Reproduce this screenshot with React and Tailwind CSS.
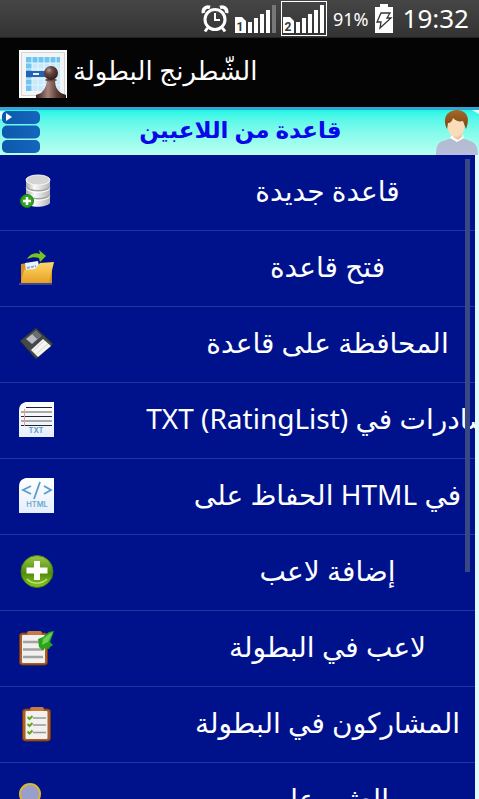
import React from "react";

function AlarmIcon() {
  return (
    <svg width="28" height="28" viewBox="0 0 28 28" fill="none" stroke="#fff" aria-hidden="true">
      <circle cx="14" cy="14.500" r="10" strokeWidth="3" />
      <path d="M14 8v7h5" strokeWidth="2" />
      <path d="M2.500 8C1.500 4 5 1 9 2.500M25.500 8C26.500 4 23 1 19 2.500" strokeWidth="3.500" />
      <path d="M6.500 23 4 26.500M21.500 23l2.500 3.500" strokeWidth="3" />
    </svg>
  );
}

function SignalIcon({ sim, faded }) {
  return (
    <svg width="42" height="29" viewBox="0 0 42 29" aria-hidden="true">
      <path d="M0 13h7l4 4v12H0z" fill="#fff" />
      <text x="5" y="27" textAnchor="middle" fontSize="12" fontWeight="700" fontFamily="Roboto, sans-serif" fill="#333">{sim}</text>
      <path d="M13 18h4v11h-4zM19 14h4v15h-4zM25 10h4v19h-4zM31 6h4v23h-4z" fill="#fff" />
      <path d="M37 1h4v28h-4z" fill={faded ? "#777" : "#fff"} />
    </svg>
  );
}

function BatteryIcon() {
  return (
    <svg width="18" height="30" viewBox="0 0 18 30" aria-hidden="true">
      <path d="M5 0h8v3h5v26H0V3h5z" fill="#fff" />
      <path d="M6 9h9l-3 5h4L5 24l1-6H2z" fill="none" stroke="#333" strokeWidth="1.300" />
    </svg>
  );
}

function PawnIcon() {
  return (
    <svg className="shrink-0" width="48" height="48" viewBox="0 0 48 48" aria-hidden="true">
      <defs>
        <radialGradient id="pawn" cx=".35" cy=".3" r=".8">
          <stop stopColor="#b59a94" /><stop offset=".35" stopColor="#684740" /><stop offset="1" stopColor="#2b1613" />
        </radialGradient>
        <linearGradient id="pawnBody">
          <stop stopColor="#3c211c" /><stop offset=".4" stopColor="#a5857d" /><stop offset=".7" stopColor="#5c3b34" /><stop offset="1" stopColor="#2b1613" />
        </linearGradient>
      </defs>
      <path d="M0 0h48v48H0z" fill="#fafafa" />
      <path d="M2.500 2.500h43v43h-43z" fill="#f2f4f5" stroke="#d2d5d6" />
      <path d="M7 7h34v34H7z" fill="#c8e9fa" />
      <path d="M7 7h34v6H7zM7 7h6v34H7z" fill="#6fc5f0" />
      <path d="M13 7v34M19 7v34M25 7v34M31 7v34M37 7v34M7 13h34M7 19h34M7 29h34M7 35h34" stroke="#e6f6fd" />
      <path d="M7 21h19v6H7z" fill="#2563b5" />
      <path d="M14 24h6" stroke="#e7f4ff" strokeWidth="2" />
      <path d="M28 29h8c0 8 2 11 6 14l5 2v3H17v-3l5-2c4-4 6-8 6-14z" fill="url(#pawnBody)" />
      <ellipse cx="32" cy="30" rx="6" ry="1.500" fill="#6b4a43" />
      <circle cx="32" cy="23" r="7" fill="url(#pawn)" />
    </svg>
  );
}

function MenuIcon() {
  return (
    <svg width="40" height="44" viewBox="0 0 40 44" aria-hidden="true">
      <defs>
        <linearGradient id="menu" x1="0" x2="1">
          <stop stopColor="#0d58ac" /><stop offset="1" stopColor="#1466bd" />
        </linearGradient>
      </defs>
      <path d="M0 0h8v8H0z" fill="#e8fbff" />
      <rect x="2" y="0" width="38" height="13" rx="5" fill="url(#menu)" />
      <rect x="2" y="14.500" width="38" height="13" rx="5" fill="url(#menu)" />
      <rect x="2" y="29" width="38" height="13" rx="5" fill="url(#menu)" />
      <path d="m6 2 6 4-6 4z" fill="#fff" />
    </svg>
  );
}

function UserIcon() {
  return (
    <svg width="44" height="46" viewBox="0 0 44 46" aria-hidden="true">
      <defs>
        <linearGradient id="shirt" x2="0" y2="1">
          <stop stopColor="#b4bad0" /><stop offset="1" stopColor="#b9bedb" />
        </linearGradient>
        <linearGradient id="hair" x2="0" y2="1">
          <stop stopColor="#a5682a" /><stop offset="1" stopColor="#7b4310" />
        </linearGradient>
      </defs>
      <path d="M37 0h7v4z" fill="#e9ffff" />
      <path d="M1 46c0-9 1-13 7-15l9-3h10l8 3c6 2 8 6 8 15z" fill="url(#shirt)" />
      <path d="m15 28 7 4 7-4-1-3H17z" fill="#fff" />
      <path d="M18 22h9v5l-4 3-5-3z" fill="#efc59b" />
      <ellipse cx="21" cy="16" rx="8.500" ry="11" fill="#fbdcb8" />
      <path d="M12 19C7 8 12 1 21 0c10 0 15 7 10 19l-3-8c-4 1-7 0-10-3-1 4-3 5-5 5z" fill="url(#hair)" />
    </svg>
  );
}

const icons = {
  database: (
    <>
      <path d="M8 6v23c3 5 20 5 24 0V6z" fill="url(#metal)" />
      <path d="M8 13c4 5 20 5 24 0M8 21c4 5 20 5 24 0" fill="none" stroke="#a5a5a5" strokeWidth="1.500" />
      <path d="M8 14.500c4 5 20 5 24 0M8 22.500c4 5 20 5 24 0" fill="none" stroke="#fff" />
      <ellipse cx="20" cy="6" rx="12" ry="5" fill="#d4d4d4" stroke="#f7f7f7" />
      <circle cx="9" cy="27" r="6.500" fill="#2fa51d" stroke="#168513" />
      <path d="M9 23v8M5 27h8" stroke="#fff" strokeWidth="2.600" />
    </>
  ),
  folder: (
    <>
      <path d="M3 14l6-1 3 4h22v16H3z" fill="#d59325" />
      <path d="m7 13 13-2 3 14-14 5z" fill="#eaf4fc" />
      <path d="m9 18 9-2" stroke="#8aafd2" strokeWidth="2" strokeDasharray="3 1" />
      <path d="m3 33 3-13 11-1 5-6 14-1-5 21z" fill="url(#gold)" />
      <path d="M1 34h33" stroke="#727b9e" />
      <path d="M9 9C12 4 17 2 22 4l-1-4 7 6-6 6-1-4c-4-1-7-1-12 1z" fill="#79c520" />
    </>
  ),
  floppy: (
    <>
      <path d="M2 15 18 2l17 16-17 15z" fill="#45484b" stroke="#252a30" />
      <path d="m8 13 10-8 5 5-9 8z" fill="#b9bdc2" />
      <path d="m14 8 4-3 5 5-4 3z" fill="#686e74" />
      <path d="m13 24 12-11 8 7-13 11z" fill="#f4f4f1" />
      <path d="m15 25 11-10m-8 13 12-10" stroke="#d5d5d2" />
    </>
  ),
  txt: (
    <>
      <path d="M8 0h28v35H1V9C1 4 3 1 8 0z" fill="url(#paper)" />
      <path d="M8 5.500h26M3 14.500h31M3 23.500h31" stroke="#24282c" />
      <path d="M3 10h31M3 19h31" stroke="#aaa" strokeWidth="2" />
      <path d="M6.500 7v17" stroke="#ee9a8e" />
      <text x="18" y="31" textAnchor="middle" fontFamily="Inter, sans-serif" fontSize="7.500" fontWeight="600" fill="#5a97c8">TXT</text>
    </>
  ),
  html: (
    <>
      <path d="M8 0h28v35H1V9C1 4 3 1 8 0z" fill="url(#paper)" />
      <path d="m13 8-8 4 8 4M26 8l7 4-7 4M22 4l-6 17" fill="none" stroke="#579bd0" strokeWidth="1.800" />
      <text x="19" y="29" textAnchor="middle" fontFamily="Inter, sans-serif" fontSize="7.500" fontWeight="600" fill="#6ca7d4">HTML</text>
    </>
  ),
  add: (
    <>
      <circle cx="19" cy="17.500" r="16" fill="url(#green)" stroke="#477d08" />
      <path d="M9 25c6 6 15 5 20 0" fill="none" stroke="#c0e378" strokeWidth="1.500" />
      <path d="M16 7h6v6.500h7.500v6H22V26h-6v-6.500H8.500v-6H16z" fill="#fff" />
    </>
  ),
  clipboard: (
    <>
      <rect x="1.500" y="3" width="28" height="32" rx="3" fill="#a95e2c" stroke="#723710" />
      <rect x="4" y="5" width="23" height="28" rx="1" fill="#f2f1ef" />
      <rect x="9" y="1" width="15" height="4" rx="2" fill="#c77b43" />
      <path d="M5 12h16M5 19.500h19M5 27h20" stroke="#a3a3a3" strokeWidth="2.500" />
      <path d="m20 9 5-2 6-5 5-1-4 11 3 3-3 2-1 2-4-1-2 3-4-4z" fill="#28a51b" />
      <path d="m25 9 6-5 4-2-5 10-6 3z" fill="#6fce58" />
    </>
  ),
  checklist: (
    <>
      <rect x="4.500" y="3" width="28" height="32" rx="3" fill="#a95e2c" stroke="#723710" />
      <rect x="7.500" y="5" width="22" height="28" rx="1" fill="#f2f1ef" />
      <rect x="12" y="1" width="14" height="4" rx="2" fill="#c77b43" />
      <path d="M15 12h13M15 19h13M15 26.500h13" stroke="#999" strokeWidth="1.500" />
      <path d="m9.500 11 2 2 3-3M9.500 18l2 2 3-3M9.500 25.500l2 2 3-3" fill="none" stroke="#65a51c" strokeWidth="2" />
    </>
  ),
  search: (
    <>
      <circle cx="12" cy="12" r="10" fill="#9a9fc9" stroke="#d9b72f" strokeWidth="2" />
      <path d="m19 20 13 13" stroke="#a95e2c" strokeWidth="5" />
    </>
  ),
};

const rows = [
  { icon: "database", label: "قاعدة جديدة" },
  { icon: "folder", label: "فتح قاعدة" },
  { icon: "floppy", label: "المحافظة على قاعدة" },
  { icon: "txt", label: <>الصادرات في <bdi dir="ltr">TXT (RatingList)</bdi></> },
  { icon: "html", label: "في HTML الحفاظ على" },
  { icon: "add", label: "إضافة لاعب" },
  { icon: "clipboard", label: "لاعب في البطولة" },
  { icon: "checklist", label: "المشاركون في البطولة" },
  { icon: "search", label: "العثور على" },
];

function SharedGradients() {
  return (
    <svg className="absolute size-0" aria-hidden="true">
      <defs>
        <linearGradient id="metal"><stop stopColor="#aaa" /><stop offset=".35" stopColor="#fafafa" /><stop offset="1" stopColor="#b5b5b5" /></linearGradient>
        <linearGradient id="gold" x2="0" y2="1"><stop stopColor="#ffd768" /><stop offset="1" stopColor="#e8a126" /></linearGradient>
        <linearGradient id="paper" x2="0" y2="1"><stop stopColor="#fff" /><stop offset="1" stopColor="#e5effb" /></linearGradient>
        <linearGradient id="green" x2="0" y2="1"><stop stopColor="#9dc84b" /><stop offset=".55" stopColor="#4e8d0a" /><stop offset="1" stopColor="#8fc52c" /></linearGradient>
      </defs>
    </svg>
  );
}

export default function App() {
  return (
    <div className="flex h-screen flex-col overflow-hidden bg-black font-['Noto_Sans','DejaVu_Sans',sans-serif] text-white">
      <SharedGradients />
      <div className="flex h-[37px] shrink-0 items-center justify-end bg-linear-to-b from-[#464646] to-[#333] pr-2.5">
        <AlarmIcon />
        <div className="ml-1.5"><SignalIcon sim="1" faded /></div>
        <div className="ml-1 border border-white px-px py-0.5"><SignalIcon sim="2" /></div>
        <span className="ml-1.5 text-lg">91%</span>
        <div className="mr-2.5 ml-1.5"><BatteryIcon /></div>
        <time className="text-[26px]">19:32</time>
      </div>
      <header className="flex h-[70px] shrink-0 items-center gap-1.5 border-t border-[#222] bg-[#040404] pt-0.5 pl-[19px]">
        <PawnIcon />
        <h1 dir="rtl" className="pb-1.5 text-[26px] whitespace-nowrap">الشّطرنج البطولة</h1>
      </header>
      <div className="flex h-12 shrink-0 items-center justify-between border-t-3 border-[#35a5d5] bg-linear-to-b from-[#1cf6e6] to-[#b9fff0]">
        <button aria-label="القائمة"><MenuIcon /></button>
        <h2 dir="rtl" className="pb-1.5 pl-1.5 text-[23px] font-bold whitespace-nowrap text-[#0808e8]">قاعدة من اللاعبين</h2>
        <button aria-label="اللاعب"><UserIcon /></button>
      </div>
      <main className="relative min-h-0 flex-1 overflow-hidden bg-[#dffcff] pr-1">
        <ul className="bg-[#00128b]">
          {rows.map((row) => (
            <li key={row.icon}>
              <button className="flex h-[76px] w-full items-center overflow-hidden border-b border-[#2238a0] pl-[18px]">
                <svg className="shrink-0" width="37" height="37" viewBox="0 0 37 37" aria-hidden="true">{icons[row.icon]}</svg>
                <span className="ml-[125px] flex min-w-0 flex-1 justify-center pb-1.5">
                  <span dir="rtl" className="shrink-0 text-[28px] whitespace-nowrap">{row.label}</span>
                </span>
              </button>
            </li>
          ))}
        </ul>
        <div className="absolute top-1 right-[9px] h-[413px] w-[5px] bg-[#394783]" />
      </main>
    </div>
  );
}
